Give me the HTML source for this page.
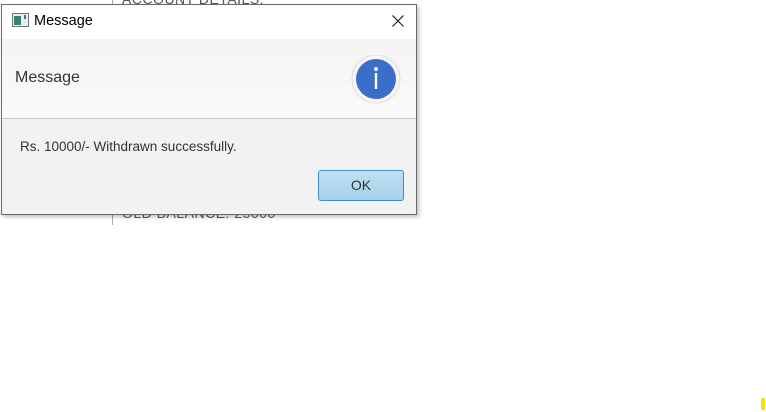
<!DOCTYPE html>
<html><head><meta charset="utf-8"><style>
*{margin:0;padding:0;box-sizing:border-box}
body{width:766px;height:412px;background:#fff;position:relative;overflow:hidden;font-family:"Segoe UI","Liberation Sans","DejaVu Sans",sans-serif}
.bgtxt{position:absolute;font-size:14px;color:#555;letter-spacing:0.5px}
.vline{position:absolute;left:112px;top:0;width:1px;height:225px;background:#aaa}
.dlg{position:absolute;left:1px;top:4px;width:416px;height:211px;border:1px solid #6b6b6b;background:#f2f2f2;box-shadow:2px 2px 4px rgba(0,0,0,0.25)}
.title{position:absolute;left:0;top:0;width:414px;height:34px;background:#fff}
.title .t{position:absolute;left:32px;top:8px;font-size:14.5px;color:#000}
.hdr{position:absolute;left:0;top:34px;width:414px;height:80px;background:linear-gradient(#f4f4f4,#fafafa);border-bottom:1px solid #c8c8c8}
.hdr .t{position:absolute;left:13px;top:30px;font-size:16px;color:#333}
.msg{position:absolute;left:18px;top:134px;font-size:13.5px;color:#333}
.ok{position:absolute;left:316px;top:165px;width:86px;height:31px;border:1px solid #3c8fc9;border-radius:3px;background:linear-gradient(#bfe0f1,#a7d0e8);font-size:14px;color:#333;text-align:center;line-height:29px}
</style></head><body>
<div class="bgtxt" style="left:122px;top:-9px">ACCOUNT DETAILS:</div>
<div class="bgtxt" style="left:122px;top:205px">OLD BALANCE: 25000</div>
<div class="vline"></div>
<div class="dlg">
 <div class="title">
  <svg style="position:absolute;left:10px;top:8px" width="17" height="14" viewBox="0 0 17 14"><rect x="0.5" y="0.5" width="16" height="13" fill="#e8eef0" stroke="#6a7a80"/><rect x="2" y="3" width="7" height="9" fill="#3a7f70"/><rect x="12" y="2" width="2" height="4" fill="#4a6fa0"/></svg>
  <div class="t">Message</div>
  <svg style="position:absolute;left:390px;top:10px" width="12" height="12" viewBox="0 0 12 12"><path d="M0.5 0.5L11.5 11.5M11.5 0.5L0.5 11.5" stroke="#222" stroke-width="1.2"/></svg>
 </div>
 <div class="hdr">
  <div class="t">Message</div>
  <svg style="position:absolute;left:349px;top:16px" width="50" height="50" viewBox="0 0 50 50"><circle cx="25" cy="24" r="24" fill="#f6f6f6" stroke="#ddd"/><circle cx="25" cy="24" r="20" fill="#3b6ec9"/><circle cx="25" cy="14" r="2" fill="#fff"/><rect x="23.8" y="18" width="2.4" height="16" fill="#fff"/></svg>
 </div>
 <div class="msg">Rs. 10000/- Withdrawn successfully.</div>
 <div class="ok">OK</div>
</div>
<div style="position:absolute;left:761px;top:398px;width:4px;height:12px;background:#f5e400"></div>
</body></html>
